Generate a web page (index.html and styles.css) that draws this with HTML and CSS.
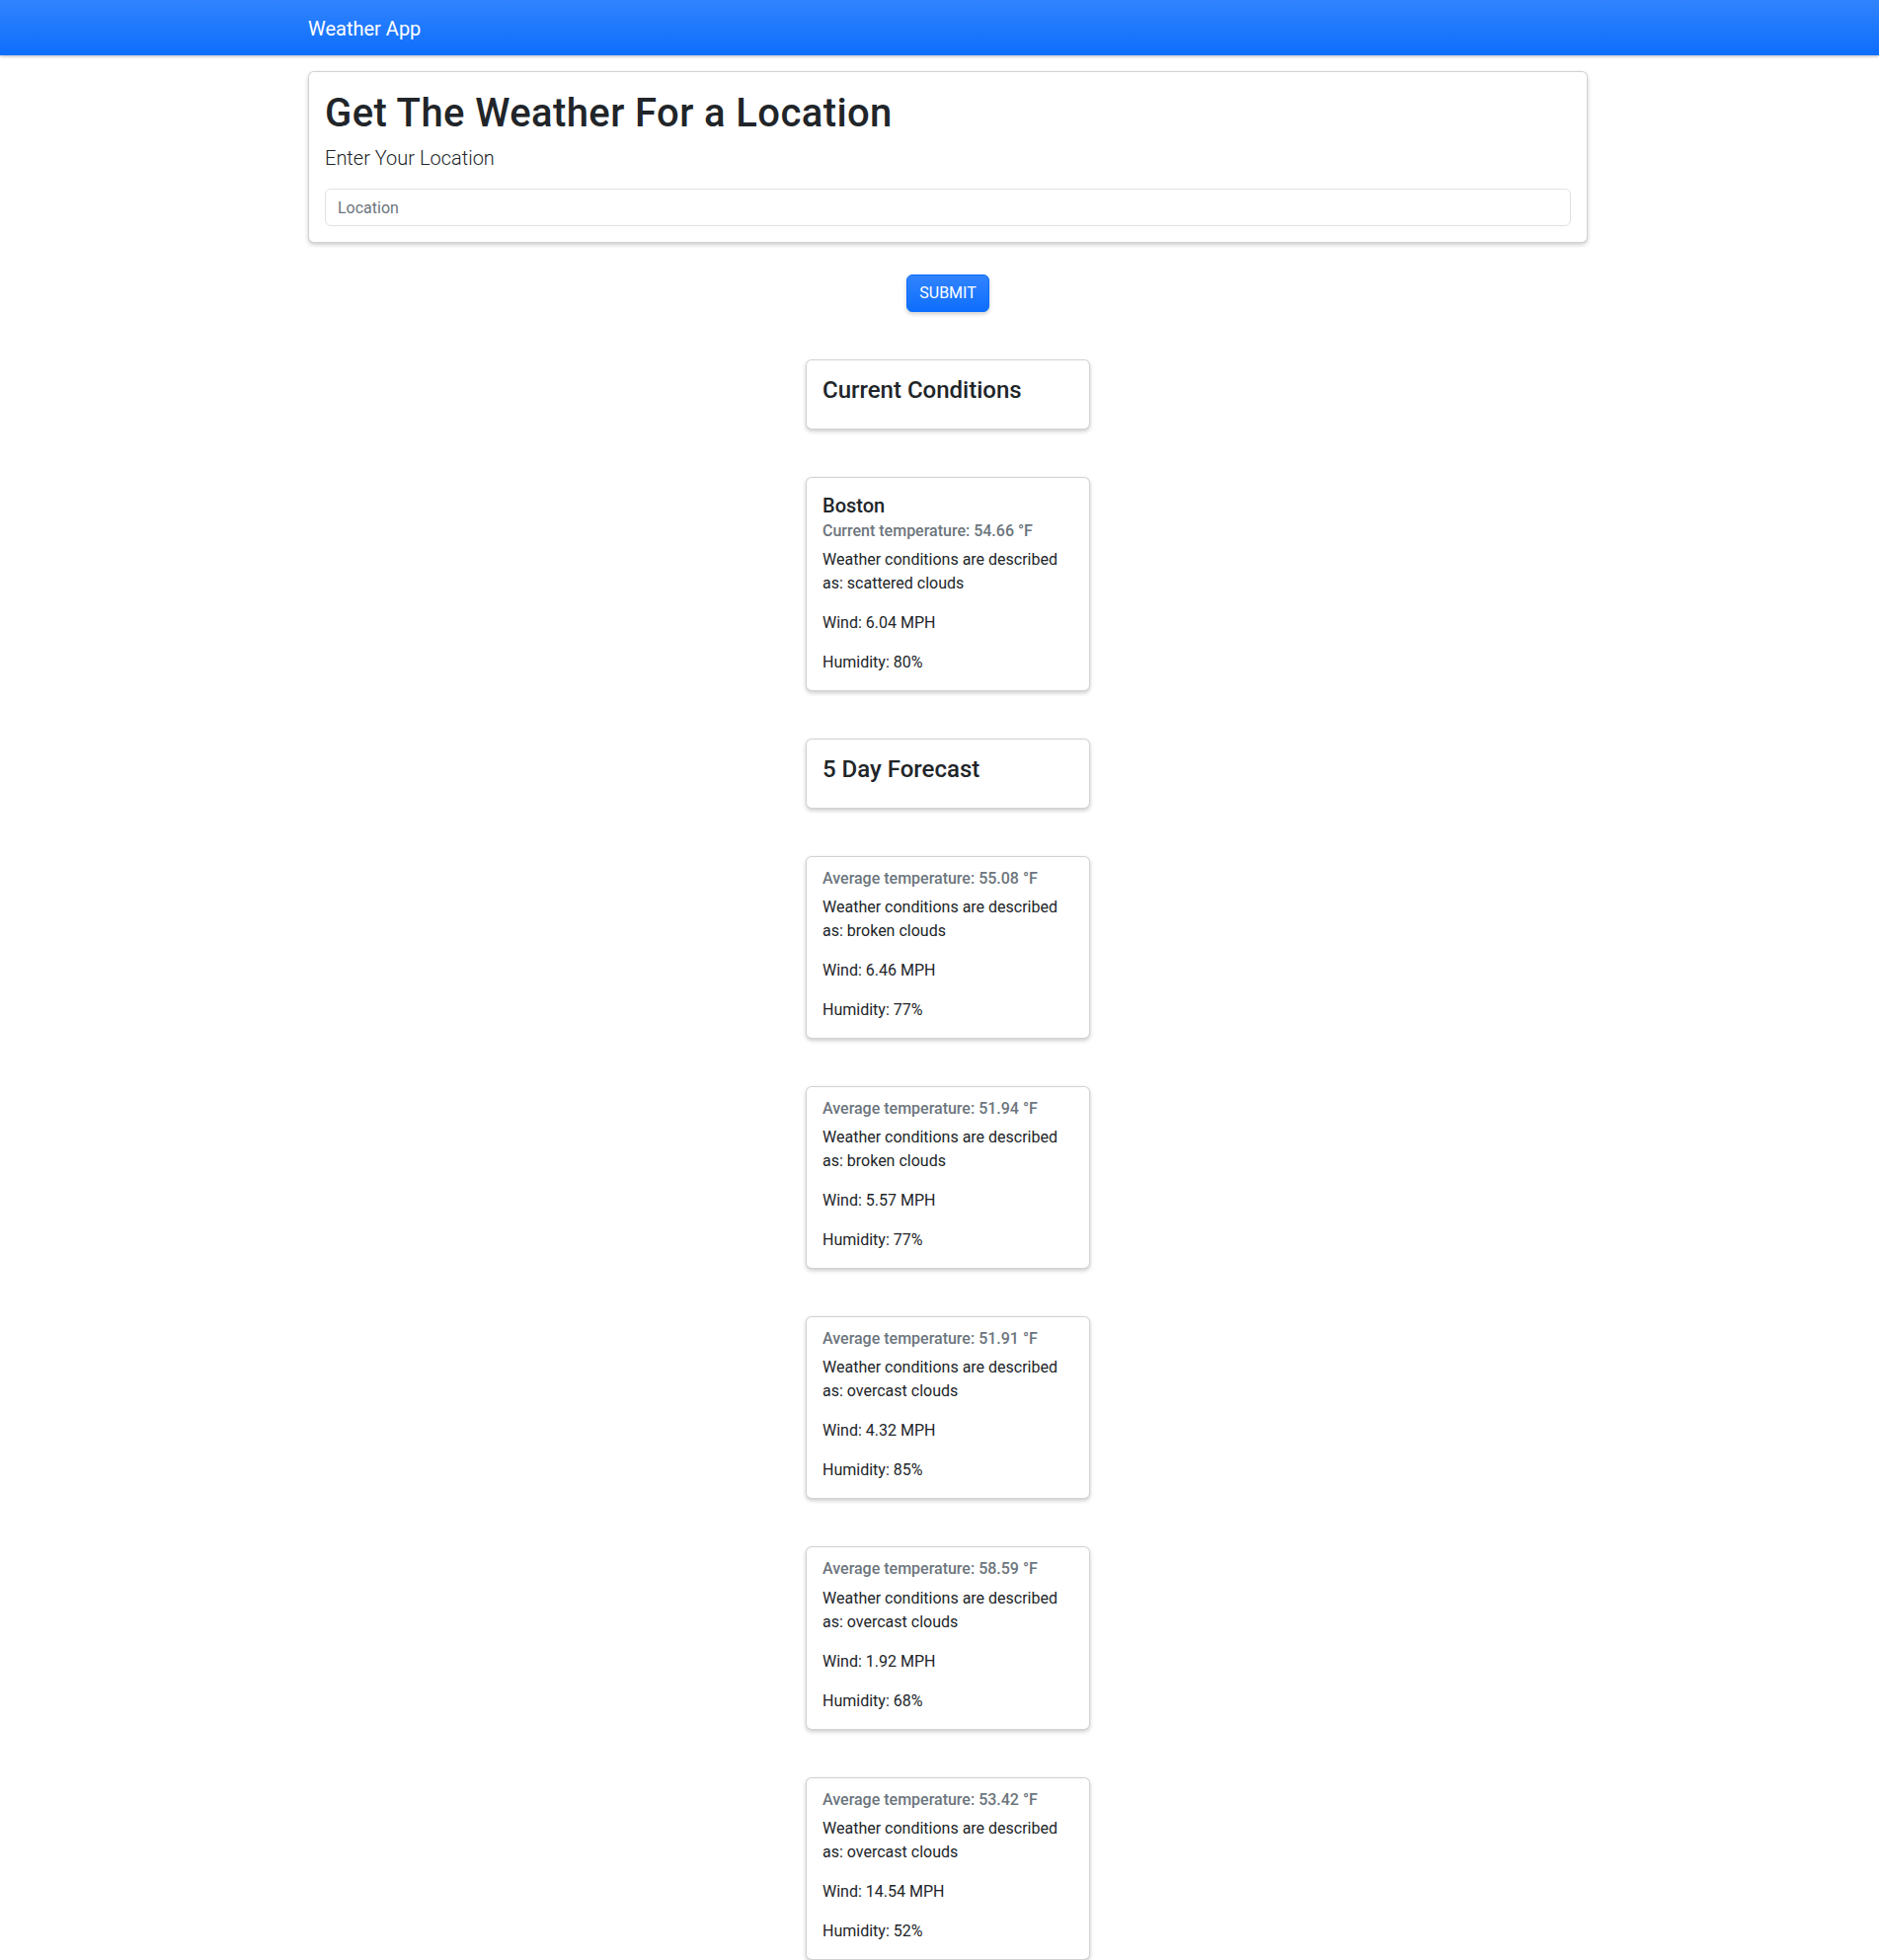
FILE: index.html
```html
<!DOCTYPE html>
<html lang="en">
<head>
<meta charset="utf-8">
<title>Weather App</title>
<link rel="stylesheet" href="styles.css">
</head>
<body>
<nav class="navbar">
  <div class="wrap">
    <span class="brand">Weather App</span>
  </div>
</nav>
<main class="wrap">
  <section class="card search-card">
    <div class="card-body">
      <h1 class="title">Get The Weather For a Location</h1>
      <p class="lead">Enter Your Location</p>
      <input class="form-control" type="text" placeholder="Location">
    </div>
  </section>
  <div class="actions">
    <button class="btn" type="button">Submit</button>
  </div>
  <div class="column">
    <div class="card small">
      <div class="card-body">
        <h4 class="card-title h4">Current Conditions</h4>
      </div>
    </div>
    <div class="card small">
      <div class="card-body">
        <h5 class="card-title h5">Boston</h5>
        <h6 class="card-subtitle">Current temperature: 54.66 °F</h6>
        <p class="card-text">Weather conditions are described as: scattered clouds</p>
        <p class="card-text">Wind: 6.04 MPH</p>
        <p class="card-text">Humidity: 80%</p>
      </div>
    </div>
    <div class="card small">
      <div class="card-body">
        <h4 class="card-title h4">5 Day Forecast</h4>
      </div>
    </div>
    <div class="card small">
      <div class="card-body">
        <h6 class="card-subtitle">Average temperature: 55.08 °F</h6>
        <p class="card-text">Weather conditions are described as: broken clouds</p>
        <p class="card-text">Wind: 6.46 MPH</p>
        <p class="card-text">Humidity: 77%</p>
      </div>
    </div>
    <div class="card small">
      <div class="card-body">
        <h6 class="card-subtitle">Average temperature: 51.94 °F</h6>
        <p class="card-text">Weather conditions are described as: broken clouds</p>
        <p class="card-text">Wind: 5.57 MPH</p>
        <p class="card-text">Humidity: 77%</p>
      </div>
    </div>
    <div class="card small">
      <div class="card-body">
        <h6 class="card-subtitle">Average temperature: 51.91 °F</h6>
        <p class="card-text">Weather conditions are described as: overcast clouds</p>
        <p class="card-text">Wind: 4.32 MPH</p>
        <p class="card-text">Humidity: 85%</p>
      </div>
    </div>
    <div class="card small">
      <div class="card-body">
        <h6 class="card-subtitle">Average temperature: 58.59 °F</h6>
        <p class="card-text">Weather conditions are described as: overcast clouds</p>
        <p class="card-text">Wind: 1.92 MPH</p>
        <p class="card-text">Humidity: 68%</p>
      </div>
    </div>
    <div class="card small">
      <div class="card-body">
        <h6 class="card-subtitle">Average temperature: 53.42 °F</h6>
        <p class="card-text">Weather conditions are described as: overcast clouds</p>
        <p class="card-text">Wind: 14.54 MPH</p>
        <p class="card-text">Humidity: 52%</p>
      </div>
    </div>
  </div>
</main>
</body>
</html>
```

FILE: styles.css
```css
* { box-sizing: border-box; }
html, body {
  margin: 0;
  padding: 0;
}
body {
  font-family: Roboto, "Liberation Sans", Arial, sans-serif;
  font-size: 16px;
  line-height: 1.5;
  color: #212529;
  background: #fff;
}
.wrap {
  width: 1296px;
  margin-left: 312px;
}
.navbar {
  height: 56px;
  padding: 8px 0;
  background-color: #0d6efd;
  background-image: linear-gradient(180deg, rgba(255,255,255,.15), rgba(255,255,255,0));
  box-shadow: 0 1px 3px rgba(0,0,0,.3);
  position: relative;
  z-index: 1;
}
.brand {
  display: inline-block;
  padding: 6px 0 4px;
  font-size: 20px;
  line-height: 30px;
  color: #fff;
}
main.wrap {
  padding-top: 16px;
}
.card {
  background: #fff;
  border: 1px solid rgba(0,0,0,.175);
  border-radius: 6px;
  box-shadow: 0 2px 4px rgba(0,0,0,.2);
}
.card-body {
  padding: 16px;
}
.title {
  margin: 0 0 8px;
  padding-top: 2px;
  height: 48px;
  font-size: 40px;
  font-weight: 500;
  line-height: 1.2;
  letter-spacing: .4px;
}
.lead {
  margin: 0 0 16px;
  font-size: 20px;
  font-weight: 300;
  line-height: 30px;
}
.form-control {
  display: block;
  width: 100%;
  height: 38px;
  padding: 6px 12px;
  font-family: inherit;
  font-size: 16px;
  line-height: 24px;
  color: #212529;
  border: 1px solid #dee2e6;
  border-radius: 6px;
  outline: none;
}
.form-control::placeholder { color: #6c757d; }
.actions {
  display: flex;
  justify-content: center;
  margin-top: 32px;
}
.btn {
  height: 38px;
  padding: 6px 12px;
  font-family: inherit;
  font-size: 16px;
  line-height: 24px;
  text-transform: uppercase;
  color: #fff;
  background-color: #0d6efd;
  background-image: linear-gradient(180deg, rgba(255,255,255,.15), rgba(255,255,255,0));
  border: 1px solid #0d6efd;
  border-radius: 6px;
  box-shadow: 0 2px 4px rgba(0,0,0,.2);
}
.column {
  display: flex;
  flex-direction: column;
  align-items: center;
}
.small {
  width: 288px;
  margin-top: 48px;
}
.card-title {
  margin: 0 0 8px;
  font-weight: 500;
  line-height: 1.2;
}
.h4 { font-size: 24px; }
.h5 { font-size: 20px; }
.card-subtitle {
  margin: -4px 0 8px;
  font-size: 16px;
  font-weight: 500;
  line-height: 1.2;
  color: #6c757d;
}
.card-text {
  margin: 0 0 16px;
}
.card-text:last-child { margin-bottom: 0; }
```
